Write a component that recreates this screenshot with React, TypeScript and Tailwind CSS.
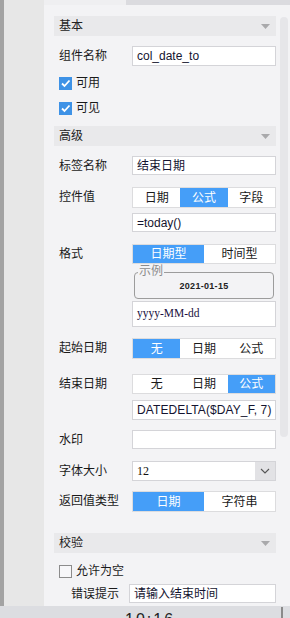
import React from "react";

const F = { fontFamily: '"Liberation Sans", "Noto Sans CJK SC", sans-serif' };

function Header({ title, mt }: { title: string; mt: string }) {
  return (
    <div className={`${mt} h-[20px] bg-[#e9e9eb] flex items-center justify-between pl-[5px] pr-[6px]`}>
      <span className="text-[12px] leading-[20px] text-[#222]">{title}</span>
      <svg width="9" height="5" viewBox="0 0 9 5"><path d="M0 0 L9 0 L4.5 5 Z" fill="#a9a9ab" /></svg>
    </div>
  );
}

function Row({ label, mt, children, labelW = "w-[73px]", pl = "pl-[5px]" }: { label: string; mt: string; children: React.ReactNode; labelW?: string; pl?: string }) {
  return (
    <div className={`${mt} flex items-start ${pl}`}>
      <div className={`${labelW} shrink-0 text-[12px] leading-[20px] text-[#1a1a1a]`}>{label}</div>
      <div className="flex-1 min-w-0">{children}</div>
    </div>
  );
}

function Input({ value, h = "h-[20px]", cls = "text-[12px] text-[#141430]" }: { value: string; h?: string; cls?: string }) {
  return (
    <div className={`${h} bg-white border border-[#d4d4d8] flex items-center pl-[4px] overflow-hidden whitespace-nowrap ${cls}`}>
      {value}
    </div>
  );
}

function Seg({ items, active, h = "h-[21px]" }: { items: string[]; active: number; h?: string }) {
  return (
    <div className={`${h} border border-[#dcdcde] bg-white flex`}>
      {items.map((t, i) => (
        <div
          key={t}
          className={`flex-1 basis-0 flex items-center justify-center text-[12px] ${i === active ? "bg-[#459ef8] text-white" : "text-[#1a1a1a]"}`}
        >
          {t}
        </div>
      ))}
    </div>
  );
}

function Check({ checked, label }: { checked: boolean; label: string }) {
  return (
    <div className="flex items-center pl-[5px] h-[13px]">
      {checked ? (
        <div className="w-[13px] h-[13px] bg-[#3e92e6] flex items-center justify-center">
          <svg width="11" height="11" viewBox="0 0 11 11"><path d="M2 5.5 L4.5 8 L9.5 2.5" stroke="white" strokeWidth="1.8" fill="none" /></svg>
        </div>
      ) : (
        <div className="w-[13px] h-[13px] border border-[#8c8c8c] bg-[#f7f7f9]" />
      )}
      <span className="ml-[4px] text-[12px] text-[#1a1a1a] leading-[13px]">{label}</span>
    </div>
  );
}

export default function App() {
  return (
    <div className="w-[290px] h-[618px] overflow-hidden flex flex-col bg-[#dcdde1]" style={F}>
      <div className="h-[606px] flex shrink-0">
        <div className="w-[4px] bg-[#a3a3a3]" />
        <div className="w-[40px] bg-[#e7e7e7]" />
        <div className="flex-1 bg-[#f3f3f5] flex flex-col relative">
          <div className="h-[5px] flex">
            <div className="w-[82px] bg-[#efeff1]" />
            <div className="flex-1 bg-[#dbdbdf]" />
          </div>
          <div className="absolute right-[2px] top-[17px] w-[8px] h-[420px] rounded-[4px] bg-[#e6e6e9]" />
          <div className="ml-[10px] w-[222px] flex flex-col">
            <Header title="基本" mt="mt-[11px]" />
            <Row label="组件名称" mt="mt-[10px]">
              <Input value="col_date_to" />
            </Row>
            <div className="mt-[11px]"><Check checked label="可用" /></div>
            <div className="mt-[12px]"><Check checked label="可见" /></div>
            <Header title="高级" mt="mt-[11px]" />
            <Row label="标签名称" mt="mt-[10px]">
              <Input value="结束日期" h="h-[19px]" />
            </Row>
            <Row label="控件值" mt="mt-[11px]">
              <Seg items={["日期", "公式", "字段"]} active={1} />
              <div className="mt-[5px]"><Input value="=today()" h="h-[19px]" /></div>
            </Row>
            <Row label="格式" mt="mt-[12px]">
              <Seg items={["日期型", "时间型"]} active={0} h="h-[20px]" />
              <div className="relative mt-[8px] mx-[2px] h-[27px] border border-[#9c9c9c] rounded-[4px]">
                <span className="absolute left-[3px] top-[-8px] px-[1px] bg-[#f3f3f5] text-[12px] leading-[13px] text-[#8c8c8c]">示例</span>
                <div className="text-center text-[9px] font-bold text-[#222] leading-[10px] mt-[8px] tracking-[0.3px]">2021-01-15</div>
              </div>
              <div className="mt-[2px]">
                <Input value="yyyy-MM-dd" h="h-[26px]" cls="text-[11.5px] text-[#201040] [font-family:'Liberation_Serif',serif]" />
              </div>
            </Row>
            <Row label="起始日期" mt="mt-[11px]">
              <Seg items={["无", "日期", "公式"]} active={0} />
            </Row>
            <Row label="结束日期" mt="mt-[15px]">
              <Seg items={["无", "日期", "公式"]} active={2} h="h-[20px]" />
              <div className="mt-[6px]"><Input value="DATEDELTA($DAY_F, 7)" cls="text-[12px] text-[#141430] tracking-[0.1px]" /></div>
            </Row>
            <Row label="水印" mt="mt-[10px]">
              <Input value="" h="h-[19px]" />
            </Row>
            <Row label="字体大小" mt="mt-[11px]">
              <div className="h-[20px] bg-white border border-[#d4d4d8] flex">
                <div className="flex-1 flex items-center pl-[4px] text-[12px] text-[#111] [font-family:'Liberation_Serif',serif]">12</div>
                <div className="w-[20px] bg-[#e2e2e5] flex items-center justify-center">
                  <svg width="10" height="6" viewBox="0 0 10 6"><path d="M1 1 L5 5 L9 1" stroke="#555" strokeWidth="1.1" fill="none" /></svg>
                </div>
              </div>
            </Row>
            <Row label="返回值类型" mt="mt-[10px]">
              <Seg items={["日期", "字符串"]} active={0} />
            </Row>
            <Header title="校验" mt="mt-[21px]" />
            <div className="mt-[12px]"><Check checked={false} label="允许为空" /></div>
            <Row label="错误提示" mt="mt-[6px]" labelW="w-[58px]" pl="pl-[17px]">
              <Input value="请输入结束时间" h="h-[19px]" />
            </Row>
          </div>
        </div>
      </div>
      <div className="h-[12px] relative overflow-hidden">
        <div className="absolute left-[125px] top-[6px] text-[16px] leading-[16px] text-[#222] tracking-[2px]">10:16</div>
        <div className="absolute left-[281px] top-[1px] w-[2px] h-[12px] bg-[#8a8a8a]" />
      </div>
    </div>
  );
}
